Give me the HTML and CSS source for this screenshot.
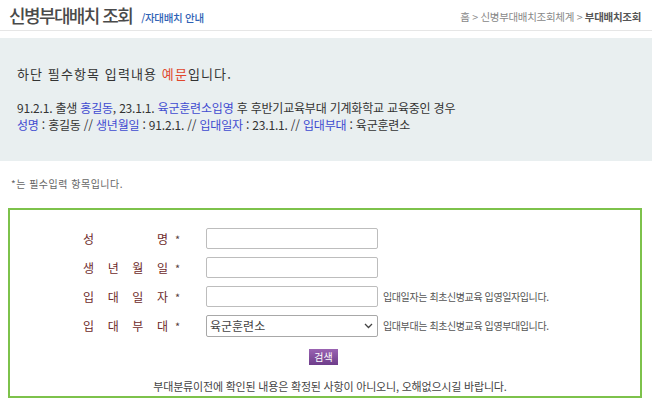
FILE: index.html
```html
<!DOCTYPE html>
<html lang="ko">
<head>
<meta charset="utf-8">
<link rel="stylesheet" href="styles.css">
</head>
<body>
<header class="top">
  <div class="title-wrap">
    <h1 class="title">신병부대배치 조회</h1>
    <span class="subtitle">/자대배치 안내</span>
  </div>
  <nav class="crumbs">홈 &gt; 신병부대배치조회체계 &gt; <b>부대배치조회</b></nav>
</header>
<section class="example">
  <p class="lead">하단 필수항목 입력내용 <span class="red">예문</span>입니다.</p>
  <p class="line">91.2.1. 출생 <span class="blue">홍길동</span>, 23.1.1. <span class="blue">육군훈련소입영</span> 후 후반기교육부대 기계화학교 교육중인 경우</p>
  <p class="line"><span class="blue">성명</span> : 홍길동 // <span class="blue">생년월일</span> : 91.2.1. // <span class="blue">입대일자</span> : 23.1.1. // <span class="blue">입대부대</span> : 육군훈련소</p>
</section>
<p class="req">*는 필수입력 항목입니다.</p>
<form class="box">
  <div class="row">
    <label class="lbl"><span>성</span><span>명</span></label><span class="star">*</span>
    <input class="inp" type="text">
  </div>
  <div class="row">
    <label class="lbl"><span>생</span><span>년</span><span>월</span><span>일</span></label><span class="star">*</span>
    <input class="inp" type="text">
  </div>
  <div class="row">
    <label class="lbl"><span>입</span><span>대</span><span>일</span><span>자</span></label><span class="star">*</span>
    <input class="inp" type="text">
    <span class="help">입대일자는 최초신병교육 입영일자입니다.</span>
  </div>
  <div class="row">
    <label class="lbl"><span>입</span><span>대</span><span>부</span><span>대</span></label><span class="star">*</span>
    <div class="sel">육군훈련소<svg width="9" height="6" viewBox="0 0 9 6"><path d="M1 1l3.5 3.5L8 1" fill="none" stroke="#444" stroke-width="1.3"/></svg></div>
    <span class="help">입대부대는 최초신병교육 입영부대입니다.</span>
  </div>
  <div class="btn-row"><button type="button" class="btn">검색</button></div>
  <p class="notice">부대분류이전에 확인된 내용은 확정된 사항이 아니오니, 오해없으시길 바랍니다.</p>
</form>
</body>
</html>
```
FILE: styles.css
```css
* { box-sizing: border-box; }
html, body { margin: 0; padding: 0; background: #fff; }
body {
  font-family: "Noto Sans CJK KR", "Noto Sans", sans-serif;
  color: #333;
  width: 652px;
}
.top {
  display: flex;
  justify-content: space-between;
  align-items: center;
  height: 31px;
  padding: 0 11px 0 9px;
  border-bottom: 1px solid #e6e6e6;
}
.title-wrap { display: flex; align-items: baseline; gap: 9px; }
.title {
  margin: 0;
  font-size: 18px;
  font-weight: 500;
  color: #4a4a4a;
  letter-spacing: -1.6px;
  line-height: 1;
  position: relative;
  top: 1px;
}
.subtitle { font-size: 10.5px; color: #2f62b5; letter-spacing: -0.3px; font-weight: 500; }
.crumbs { font-size: 10.5px; color: #888; letter-spacing: -0.3px; position: relative; top: 1px; }
.crumbs b { color: #555; font-weight: 700; }
.example {
  margin-top: 7px;
  background: #e9eff0;
  height: 123px;
  padding: 26px 17px 0;
}
.example p { margin: 0; }
.lead { font-size: 13px; color: #333; line-height: 20px; margin-bottom: 15px !important; letter-spacing: 1.1px; }
.red { color: #e0462c; }
.line { font-size: 12px; line-height: 17px; color: #333; letter-spacing: -0.2px; }
.blue { color: #3f4bd0; }
.req { margin: 16px 0 0 11px; font-size: 10px; color: #666; line-height: 14px; letter-spacing: 0.5px; }
.box {
  margin: 17px 10px 0 8px;
  border: 2px solid #7dc24b;
  height: 190px;
  padding: 14px 0 0;
}
.row {
  display: flex;
  align-items: center;
  height: 29px;
  padding-left: 73px;
}
.lbl {
  display: flex;
  justify-content: space-between;
  width: 85px;
  font-size: 12px;
  color: #6e2b2b;
}
.star { font-size: 11px; color: #5a4040; width: 38px; padding-left: 7px; }
.inp {
  width: 172px;
  height: 21px;
  border: 1px solid #bdbdbd;
  border-radius: 2px;
  background: #fff;
  margin: 0;
}
.help { font-size: 10px; color: #555; margin-left: 5px; letter-spacing: -0.4px; }
.sel {
  width: 172px;
  height: 22px;
  border: 1px solid #a8a8a8;
  border-radius: 2px;
  font-size: 12px;
  color: #444;
  display: flex;
  align-items: center;
  justify-content: space-between;
  padding: 0 4px 0 3px;
}
.btn-row { display: flex; justify-content: center; padding: 9px 0 0 8px; margin-left: -11px; }
.btn {
  width: 29px;
  height: 16px;
  padding: 0;
  border: 0;
  background: linear-gradient(#9a63b2, #6e3d8a);
  color: #fff;
  font-family: inherit;
  font-size: 10px;
  line-height: 16px;
}
.notice { margin: 13px 0 0; text-align: center; font-size: 11px; color: #444; letter-spacing: -0.2px; padding-left: 10px; }
```
